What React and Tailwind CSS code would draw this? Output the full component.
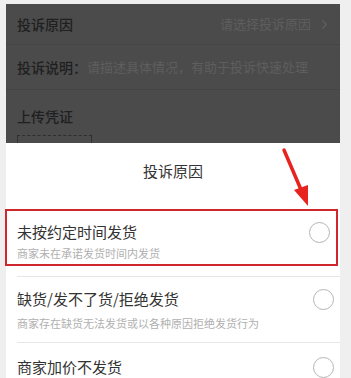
import { ChevronRight } from 'lucide-react';

function Radio() {
  return <div className="w-[21px] h-[21px] rounded-full border border-[#b5b5b5] shrink-0" />;
}

function Reason({ title, sub, tight }) {
  return (
    <div className="flex items-start justify-between pr-[6px]">
      <div className="flex flex-col">
        <span className="text-[15px] leading-[20px] text-[#333]">{title}</span>
        {sub && (
          <span className={'text-[11px] leading-[16px] text-[#b0b0b0] ' + (tight ? 'mt-[3px]' : 'mt-[6px]')}>{sub}</span>
        )}
      </div>
      <Radio />
    </div>
  );
}

export default function App() {
  return (
    <div
      className="relative w-[351px] h-[378px] overflow-hidden bg-[#efefef] pt-[4px] pl-[6px] pr-[11px]"
      style={{ fontFamily: '"Noto Sans CJK SC", "Noto Sans", sans-serif' }}
    >
      {/* dimmed form behind the sheet */}
      <div className="h-[139px] bg-[#4b4b4b] text-[#1f1f1f]">
        <div className="h-[41px] flex items-center justify-between pl-[11px] pr-[8px] border-b border-[#444]">
          <span className="text-[14px] font-medium">投诉原因</span>
          <span className="flex items-center text-[13px] text-[#5e5e5e]">
            请选择投诉原因
            <ChevronRight size={15} className="ml-[6px] text-[#5e5e5e]" />
          </span>
        </div>
        <div className="h-[45px] flex items-center pl-[11px] border-b border-[#444] text-[13px]">
          <span className="text-[14px] font-medium">投诉说明：</span>
          <span className="text-[#5e5e5e]">请描述具体情况，有助于投诉快速处理</span>
        </div>
        <div className="pl-[11px] pt-[16px]">
          <div className="text-[14px] leading-[20px] font-medium">上传凭证</div>
          <div className="mt-[9px] w-[75px] h-[10px] border-t border-l border-r border-dashed border-[#2e2e2e]" />
        </div>
      </div>

      {/* bottom sheet */}
      <div className="bg-white h-[240px]">
        <div className="h-[66px] pt-[18px] text-center text-[15px] leading-[20px] text-[#333]">投诉原因</div>

        <div className="-ml-[1px] mr-[2px] h-[57px] border-2 border-[#d0262d] pl-[10px] pt-[11px]">
          <Reason title="未按约定时间发货" sub="商家未在承诺发货时间内发货" tight />
        </div>

        <div className="ml-[11px] mt-[10px] border-t border-[#e6e6e6] h-[66px] pt-[12px]">
          <Reason title="缺货/发不了货/拒绝发货" sub="商家存在缺货无法发货或以各种原因拒绝发货行为" />
        </div>

        <div className="ml-[11px] border-t border-[#e6e6e6] pt-[14px]">
          <Reason title="商家加价不发货" />
        </div>
      </div>

      {/* red annotation arrow */}
      <svg className="absolute left-[270px] top-[145px]" width="50" height="65" viewBox="0 0 50 65">
        <line x1="14" y1="5" x2="32" y2="47" stroke="#e8221f" strokeWidth="3.5" strokeLinecap="round" />
        <polygon points="24,45 38,40 38,61" fill="#e8221f" />
      </svg>
    </div>
  );
}
